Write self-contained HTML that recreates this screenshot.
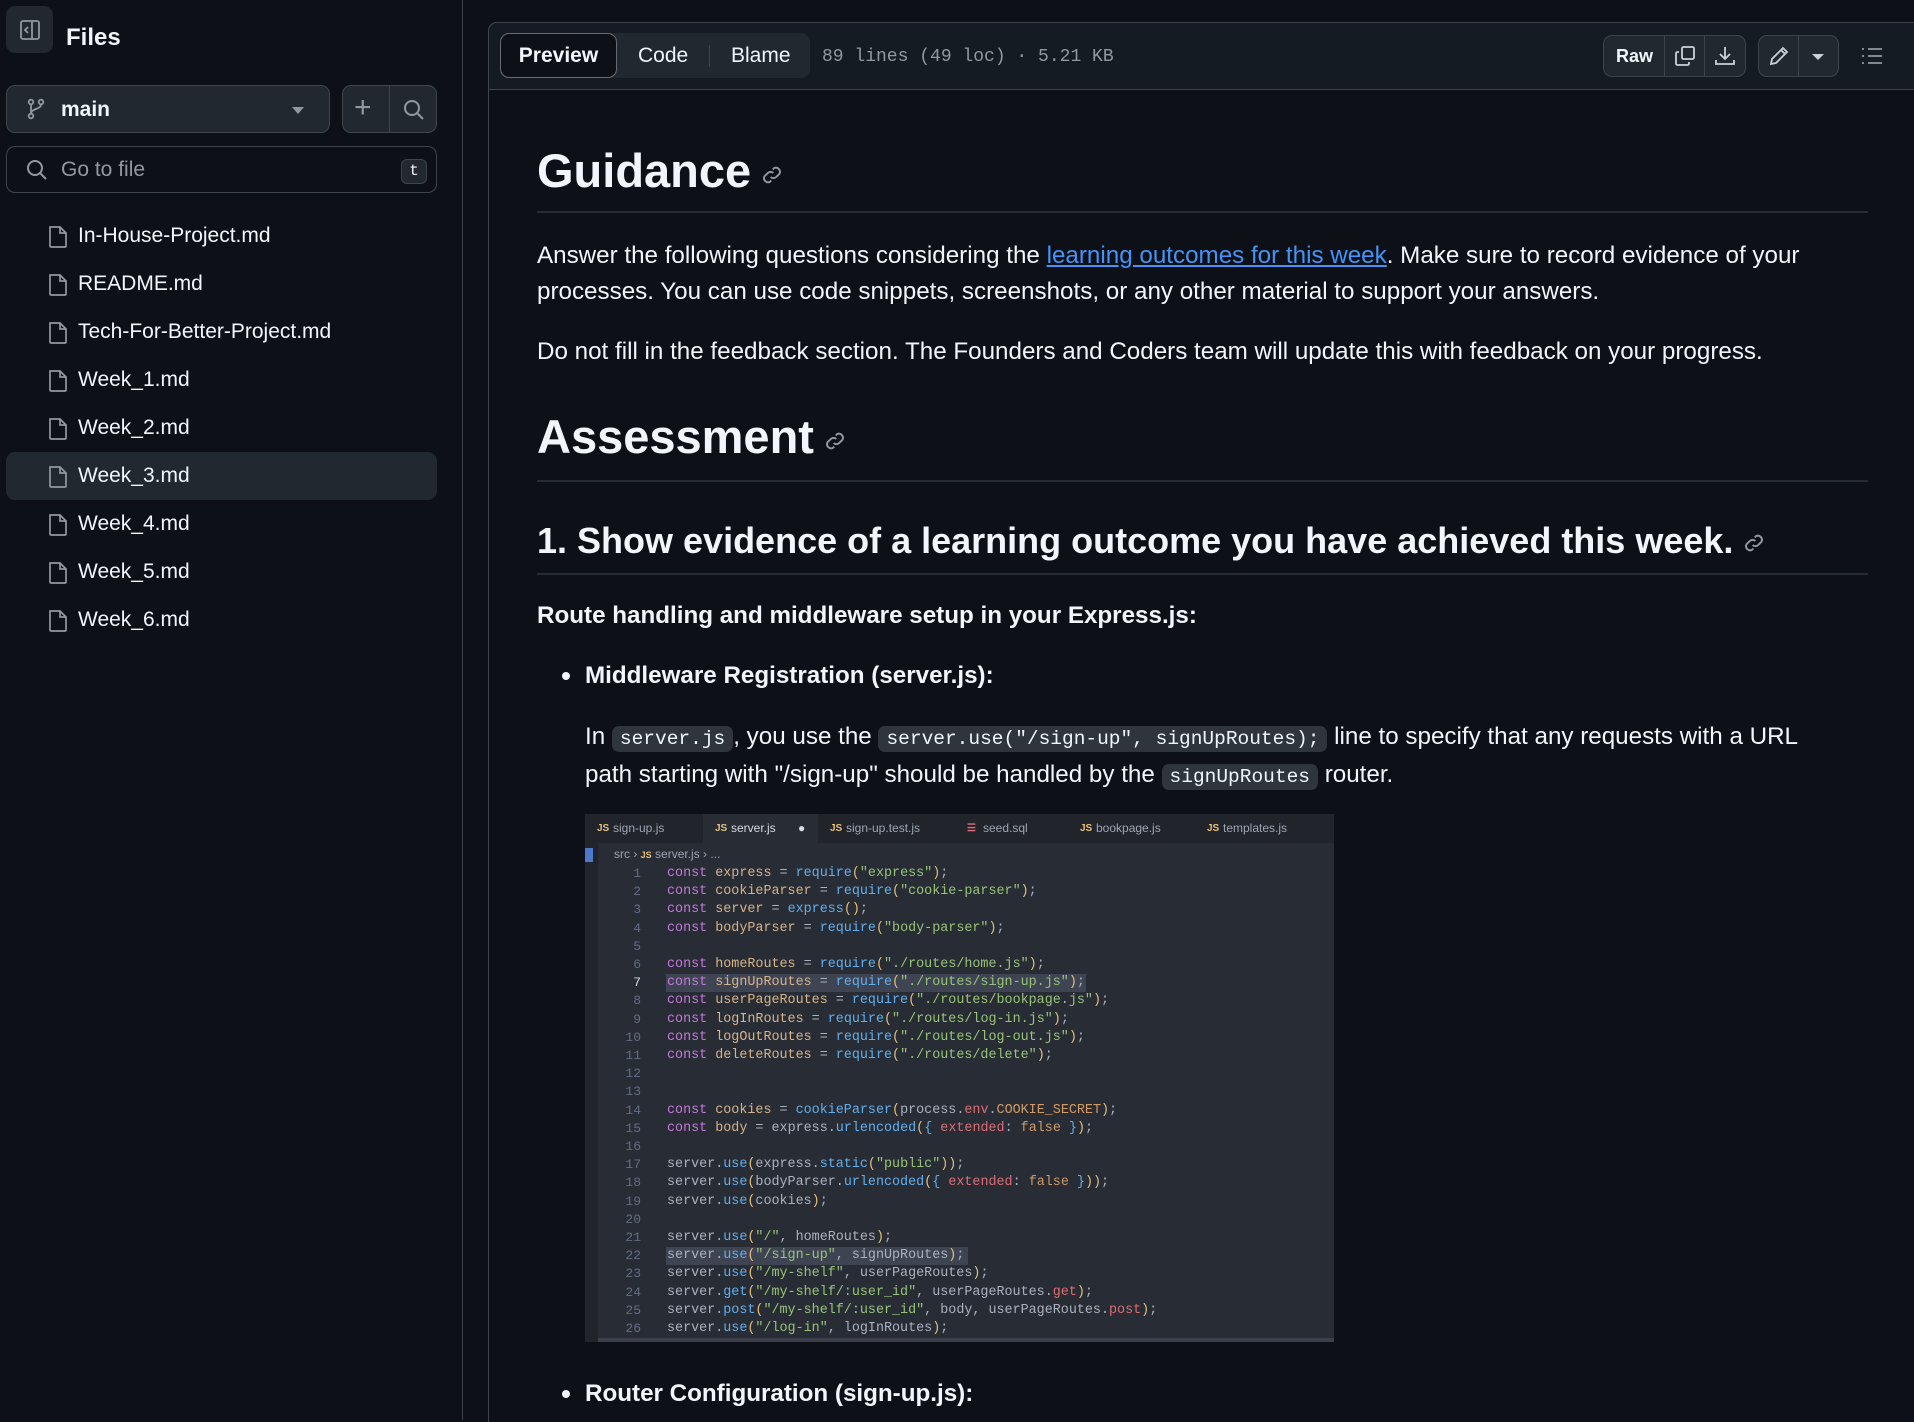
<!DOCTYPE html>
<html><head><meta charset="utf-8"><style>
*{box-sizing:border-box;margin:0;padding:0}
body{width:1914px;height:1420px;background:#0d1117;color:#f0f6fc;font-family:"Liberation Sans",sans-serif;position:relative;overflow:hidden}
.a{position:absolute}
.side{left:0;top:0;width:463px;height:1420px;border-right:1px solid #3d444d}
.btn{border:1px solid #3d444d;background:#212830;border-radius:9px}
.fi{position:absolute;left:6px;width:431px;height:48px;border-radius:9px;font-size:21px;line-height:48px;color:#f0f6fc;padding-left:72px}
.fi svg{position:absolute;left:42px;top:13px}
.sel{background:#212830}
.main{left:488px;top:22px;width:1426px;height:1400px;border:1px solid #3d444d;border-right:none;border-bottom:none;border-radius:9px 0 0 0}
.hdr{left:488px;top:22px;width:1426px;height:68px;background:#151b23;border:1px solid #3d444d;border-right:none;border-radius:9px 0 0 0}
.md{left:537px;width:1331px;white-space:nowrap}
p.t{font-size:24.2px;line-height:36px;color:#f0f6fc}
h1{font-size:47px;font-weight:bold;line-height:60px}
.rule{height:2px;background:#262c36;left:537px;width:1331px}
code{font-family:"Liberation Mono",monospace;font-size:19.5px;background:#2f353d;border-radius:7px;padding:2px 8px}
.lk{display:inline-block;vertical-align:middle;margin-left:10px}
.code{left:585px;top:814px;width:749px;height:528px;background:#282c34;overflow:hidden;font-family:"Liberation Mono",monospace}
.tabs{position:absolute;left:0;top:0;width:749px;height:29px;background:#21252b;font-family:"Liberation Sans",sans-serif;font-size:12px;color:#9da5b4}
.tab{position:absolute;top:0;height:29px;line-height:29px;padding-left:28px}
.tab b{position:absolute;left:12px;color:#e5c07b;font-size:10px;font-weight:bold}
.ln{position:absolute;left:0;width:56px;text-align:right;color:#636d83;font-size:13px}
.cl{position:absolute;left:82px;font-size:13.4px;color:#abb2bf;white-space:pre}
.k{color:#c678dd}.v{color:#d7b48a}.f{color:#61afef}.s{color:#98c379}.p{color:#e5c07b}.r{color:#e06c75}.o{color:#d19a66}
</style></head><body>
<div class="a side"></div>
<div class="a btn" style="left:6px;top:6px;width:47px;height:47px;border:none;background:#212830"></div>
<svg class="a" style="left:18px;top:18px" width="24" height="24" viewBox="0 0 24 24" fill="none" stroke="#9198a1" stroke-width="1.8"><rect x="3" y="3" width="18" height="18" rx="2"/><line x1="14" y1="3" x2="14" y2="21"/><path d="M10 9l-3 3 3 3" /></svg>
<div class="a" style="left:66px;top:24px;font-size:24px;font-weight:bold">Files</div>
<div class="a btn" style="left:6px;top:85px;width:324px;height:48px"></div>
<svg class="a" style="left:26px;top:98px" width="20" height="22" viewBox="0 0 20 22" fill="none" stroke="#9198a1" stroke-width="1.8"><circle cx="5" cy="4" r="2.3"/><circle cx="5" cy="18" r="2.3"/><circle cx="15" cy="4" r="2.3"/><path d="M5 6.5v9M15 6.5c0 5-10 4-10 9"/></svg>
<div class="a" style="left:61px;top:98px;font-size:21px;font-weight:bold">main</div>
<div class="a" style="left:292px;top:107px;border-left:6px solid transparent;border-right:6px solid transparent;border-top:7px solid #9198a1"></div>
<div class="a btn" style="left:342px;top:85px;width:95px;height:48px"></div>
<div class="a" style="left:389px;top:86px;width:1px;height:46px;background:#3d444d"></div>
<div class="a" style="left:354px;top:91px;font-size:30px;color:#9198a1;font-weight:300">+</div>
<svg class="a" style="left:402px;top:98px" width="24" height="24" viewBox="0 0 24 24" fill="none" stroke="#9198a1" stroke-width="2"><circle cx="10" cy="10" r="7"/><path d="M15 15l6 6"/></svg>
<div class="a" style="left:6px;top:146px;width:431px;height:47px;border:1px solid #3d444d;border-radius:9px"></div>
<svg class="a" style="left:25px;top:158px" width="24" height="24" viewBox="0 0 24 24" fill="none" stroke="#9198a1" stroke-width="2"><circle cx="10" cy="10" r="7"/><path d="M15 15l6 6"/></svg>
<div class="a" style="left:61px;top:158px;font-size:21px;color:#9198a1">Go to file</div>
<div class="a" style="left:401px;top:159px;width:26px;height:25px;border:1px solid #3d444d;border-radius:6px;background:#212830;font-family:'Liberation Mono',monospace;font-size:16px;text-align:center;line-height:23px;color:#f0f6fc">t</div>
<div class="fi" style="top:212px"><svg width="20" height="24" viewBox="0 0 20 24" fill="none" stroke="#9198a1" stroke-width="1.7"><path d="M2 2h10l6 6v13a1 1 0 0 1-1 1H3a1 1 0 0 1-1-1z M12 2v6h6"/></svg>In-House-Project.md</div>
<div class="fi" style="top:260px"><svg width="20" height="24" viewBox="0 0 20 24" fill="none" stroke="#9198a1" stroke-width="1.7"><path d="M2 2h10l6 6v13a1 1 0 0 1-1 1H3a1 1 0 0 1-1-1z M12 2v6h6"/></svg>README.md</div>
<div class="fi" style="top:308px"><svg width="20" height="24" viewBox="0 0 20 24" fill="none" stroke="#9198a1" stroke-width="1.7"><path d="M2 2h10l6 6v13a1 1 0 0 1-1 1H3a1 1 0 0 1-1-1z M12 2v6h6"/></svg>Tech-For-Better-Project.md</div>
<div class="fi" style="top:356px"><svg width="20" height="24" viewBox="0 0 20 24" fill="none" stroke="#9198a1" stroke-width="1.7"><path d="M2 2h10l6 6v13a1 1 0 0 1-1 1H3a1 1 0 0 1-1-1z M12 2v6h6"/></svg>Week_1.md</div>
<div class="fi" style="top:404px"><svg width="20" height="24" viewBox="0 0 20 24" fill="none" stroke="#9198a1" stroke-width="1.7"><path d="M2 2h10l6 6v13a1 1 0 0 1-1 1H3a1 1 0 0 1-1-1z M12 2v6h6"/></svg>Week_2.md</div>
<div class="fi sel" style="top:452px"><svg width="20" height="24" viewBox="0 0 20 24" fill="none" stroke="#9198a1" stroke-width="1.7"><path d="M2 2h10l6 6v13a1 1 0 0 1-1 1H3a1 1 0 0 1-1-1z M12 2v6h6"/></svg>Week_3.md</div>
<div class="fi" style="top:500px"><svg width="20" height="24" viewBox="0 0 20 24" fill="none" stroke="#9198a1" stroke-width="1.7"><path d="M2 2h10l6 6v13a1 1 0 0 1-1 1H3a1 1 0 0 1-1-1z M12 2v6h6"/></svg>Week_4.md</div>
<div class="fi" style="top:548px"><svg width="20" height="24" viewBox="0 0 20 24" fill="none" stroke="#9198a1" stroke-width="1.7"><path d="M2 2h10l6 6v13a1 1 0 0 1-1 1H3a1 1 0 0 1-1-1z M12 2v6h6"/></svg>Week_5.md</div>
<div class="fi" style="top:596px"><svg width="20" height="24" viewBox="0 0 20 24" fill="none" stroke="#9198a1" stroke-width="1.7"><path d="M2 2h10l6 6v13a1 1 0 0 1-1 1H3a1 1 0 0 1-1-1z M12 2v6h6"/></svg>Week_6.md</div>

<div class="a main"></div>
<div class="a hdr"></div>
<div class="a" style="left:500px;top:33px;width:310px;height:45px;background:#212830;border-radius:9px"></div>
<div class="a" style="left:500px;top:33px;width:117px;height:45px;background:#0d1117;border:1px solid #656c76;border-radius:9px;font-size:21px;font-weight:bold;text-align:center;line-height:43px">Preview</div>
<div class="a" style="left:638px;top:44px;font-size:21px">Code</div>
<div class="a" style="left:709px;top:45px;width:1px;height:22px;background:#3d444d"></div>
<div class="a" style="left:731px;top:44px;font-size:21px">Blame</div>
<div class="a" style="left:822px;top:47px;font-size:18px;font-family:'Liberation Mono',monospace;color:#9198a1">89 lines (49 loc) · 5.21 KB</div>
<div class="a btn" style="left:1603px;top:35px;width:143px;height:42px"></div>
<div class="a" style="left:1664px;top:36px;width:1px;height:40px;background:#3d444d"></div>
<div class="a" style="left:1704px;top:36px;width:1px;height:40px;background:#3d444d"></div>
<div class="a" style="left:1616px;top:46px;font-size:18px;font-weight:bold">Raw</div>
<svg class="a" style="left:1673px;top:44px" width="24" height="24" viewBox="0 0 24 24" fill="none" stroke="#c9d1d9" stroke-width="1.8"><rect x="9" y="3" width="12" height="12" rx="1.5"/><path d="M6 8H4.5A1.5 1.5 0 0 0 3 9.5v10A1.5 1.5 0 0 0 4.5 21h10a1.5 1.5 0 0 0 1.5-1.5V18"/></svg>
<svg class="a" style="left:1713px;top:44px" width="24" height="24" viewBox="0 0 24 24" fill="none" stroke="#c9d1d9" stroke-width="1.8"><path d="M12 3v12M7 10l5 5 5-5M3 16v4h18v-4"/></svg>
<div class="a btn" style="left:1758px;top:35px;width:81px;height:42px"></div>
<div class="a" style="left:1798px;top:36px;width:1px;height:40px;background:#3d444d"></div>
<svg class="a" style="left:1767px;top:44px" width="24" height="24" viewBox="0 0 24 24" fill="none" stroke="#c9d1d9" stroke-width="1.8"><path d="M4 20l1-5L16 4l4 4L9 19z M14 6l4 4"/></svg>
<div class="a" style="left:1812px;top:54px;border-left:6px solid transparent;border-right:6px solid transparent;border-top:6px solid #c9d1d9"></div>
<svg class="a" style="left:1860px;top:44px" width="24" height="24" viewBox="0 0 24 24" fill="none" stroke="#9198a1" stroke-width="1.8"><path d="M8 5h14M8 12h14M8 19h14M2 5h2M2 12h2M2 19h2"/></svg>

<h1 class="a md" style="top:141px">Guidance<svg class="lk" width="22" height="22" viewBox="0 0 16 16" fill="none" stroke="#9198a1" stroke-width="1.4"><path d="M7 9.5a3 3 0 0 0 4 0l2.5-2.5a3 3 0 0 0-4-4L8.5 4M9 6.5a3 3 0 0 0-4 0L2.5 9a3 3 0 0 0 4 4l1-1"/></svg></h1>
<div class="a rule" style="top:211px"></div>
<p class="a md t" style="top:238px">Answer the following questions considering the <span style="color:#4493f8;text-decoration:underline">learning outcomes for this week</span>. Make sure to record evidence of your<br>processes. You can use code snippets, screenshots, or any other material to support your answers.</p>
<p class="a md t" style="top:334px">Do not fill in the feedback section. The Founders and Coders team will update this with feedback on your progress.</p>
<h1 class="a md" style="top:407px">Assessment<svg class="lk" width="22" height="22" viewBox="0 0 16 16" fill="none" stroke="#9198a1" stroke-width="1.4"><path d="M7 9.5a3 3 0 0 0 4 0l2.5-2.5a3 3 0 0 0-4-4L8.5 4M9 6.5a3 3 0 0 0-4 0L2.5 9a3 3 0 0 0 4 4l1-1"/></svg></h1>
<div class="a rule" style="top:480px"></div>
<div class="a md" style="top:518px;font-size:36px;font-weight:bold;line-height:46px">1. Show evidence of a learning outcome you have achieved this week.<svg class="lk" width="22" height="22" viewBox="0 0 16 16" fill="none" stroke="#9198a1" stroke-width="1.4"><path d="M7 9.5a3 3 0 0 0 4 0l2.5-2.5a3 3 0 0 0-4-4L8.5 4M9 6.5a3 3 0 0 0-4 0L2.5 9a3 3 0 0 0 4 4l1-1"/></svg></div>
<div class="a rule" style="top:573px"></div>
<p class="a md t" style="top:598px;font-weight:bold">Route handling and middleware setup in your Express.js:</p>
<div class="a" style="left:562px;top:672px;width:8px;height:8px;border-radius:50%;background:#f0f6fc"></div>
<p class="a t" style="left:585px;top:658px;font-weight:bold;white-space:nowrap">Middleware Registration (server.js):</p>
<p class="a t" style="left:585px;top:719px;white-space:nowrap;line-height:35px">In <code>server.js</code>, you use the <code>server.use("/sign-up", signUpRoutes);</code> line to specify that any requests with a URL<br>path starting with "/sign-up" should be handled by the <code>signUpRoutes</code> router.</p>

<div class="a code">
<div class="tabs">
<div class="tab" style="left:0;width:118px"><b>JS</b>sign-up.js</div>
<div class="tab" style="left:118px;width:115px;background:#282c34;color:#d7dae0"><b>JS</b>server.js<span style="position:absolute;left:95px;top:0;color:#d7dae0">●</span></div>
<div class="tab" style="left:233px;width:137px"><b>JS</b>sign-up.test.js</div>
<div class="tab" style="left:370px;width:113px"><b style="color:#e06c75">☰</b>seed.sql</div>
<div class="tab" style="left:483px;width:127px"><b>JS</b>bookpage.js</div>
<div class="tab" style="left:610px;width:139px"><b>JS</b>templates.js</div>
</div>
<div style="position:absolute;left:0;top:29px;width:13px;height:499px;background:#21252b"></div>
<div style="position:absolute;left:0;top:34px;width:8px;height:14px;background:#4d78cc"></div>
<div style="position:absolute;left:29px;top:33px;font-family:'Liberation Sans',sans-serif;font-size:12px;color:#9da5b4">src › <span style="color:#e5c07b;font-size:9px;font-weight:bold">JS</span> server.js › ...</div>
<div style="position:absolute;left:81px;top:160px;width:420px;height:18px;background:#3e4451"></div>
<div style="position:absolute;left:81px;top:433px;width:302px;height:18px;background:#3e4451"></div>
<div class="ln" style="top:51px;line-height:18.2px">1<br>2<br>3<br>4<br>5<br>6<br><span style="color:#d7dae0">7</span><br>8<br>9<br>10<br>11<br>12<br>13<br>14<br>15<br>16<br>17<br>18<br>19<br>20<br>21<br>22<br>23<br>24<br>25<br>26</div>
<div class="cl" style="top:51px;line-height:18.2px"><span class="k">const</span> <span class="v">express</span> = <span class="f">require</span><span class="p">(</span><span class="s">"express"</span><span class="p">)</span>;
<span class="k">const</span> <span class="v">cookieParser</span> = <span class="f">require</span><span class="p">(</span><span class="s">"cookie-parser"</span><span class="p">)</span>;
<span class="k">const</span> <span class="v">server</span> = <span class="f">express</span><span class="p">()</span>;
<span class="k">const</span> <span class="v">bodyParser</span> = <span class="f">require</span><span class="p">(</span><span class="s">"body-parser"</span><span class="p">)</span>;

<span class="k">const</span> <span class="v">homeRoutes</span> = <span class="f">require</span><span class="p">(</span><span class="s">"./routes/home.js"</span><span class="p">)</span>;
<span class="k">const</span> <span class="v">signUpRoutes</span> = <span class="f">require</span><span class="p">(</span><span class="s">"./routes/sign-up.js"</span><span class="p">)</span>;
<span class="k">const</span> <span class="v">userPageRoutes</span> = <span class="f">require</span><span class="p">(</span><span class="s">"./routes/bookpage.js"</span><span class="p">)</span>;
<span class="k">const</span> <span class="v">logInRoutes</span> = <span class="f">require</span><span class="p">(</span><span class="s">"./routes/log-in.js"</span><span class="p">)</span>;
<span class="k">const</span> <span class="v">logOutRoutes</span> = <span class="f">require</span><span class="p">(</span><span class="s">"./routes/log-out.js"</span><span class="p">)</span>;
<span class="k">const</span> <span class="v">deleteRoutes</span> = <span class="f">require</span><span class="p">(</span><span class="s">"./routes/delete"</span><span class="p">)</span>;


<span class="k">const</span> <span class="v">cookies</span> = <span class="f">cookieParser</span><span class="p">(</span>process.<span class="r">env</span>.<span class="o">COOKIE_SECRET</span><span class="p">)</span>;
<span class="k">const</span> <span class="v">body</span> = express.<span class="f">urlencoded</span><span class="p">(</span><span class="f">{</span> <span class="r">extended</span>: <span class="o">false</span> <span class="f">}</span><span class="p">)</span>;

server.<span class="f">use</span><span class="p">(</span>express.<span class="f">static</span><span class="p">(</span><span class="s">"public"</span><span class="p">))</span>;
server.<span class="f">use</span><span class="p">(</span>bodyParser.<span class="f">urlencoded</span><span class="p">(</span><span class="f">{</span> <span class="r">extended</span>: <span class="o">false</span> <span class="f">}</span><span class="p">))</span>;
server.<span class="f">use</span><span class="p">(</span>cookies<span class="p">)</span>;

server.<span class="f">use</span><span class="p">(</span><span class="s">"/"</span>, homeRoutes<span class="p">)</span>;
server.<span class="f">use</span><span class="p">(</span><span class="s">"/sign-up"</span>, signUpRoutes<span class="p">)</span>;
server.<span class="f">use</span><span class="p">(</span><span class="s">"/my-shelf"</span>, userPageRoutes<span class="p">)</span>;
server.<span class="f">get</span><span class="p">(</span><span class="s">"/my-shelf/:user_id"</span>, userPageRoutes.<span class="r">get</span><span class="p">)</span>;
server.<span class="f">post</span><span class="p">(</span><span class="s">"/my-shelf/:user_id"</span>, body, userPageRoutes.<span class="r">post</span><span class="p">)</span>;
server.<span class="f">use</span><span class="p">(</span><span class="s">"/log-in"</span>, logInRoutes<span class="p">)</span>;</div>
<div style="position:absolute;left:13px;top:524px;width:736px;height:4px;background:#3a3f4b"></div>
</div>

<div class="a" style="left:562px;top:1390px;width:8px;height:8px;border-radius:50%;background:#f0f6fc"></div>
<p class="a t" style="left:585px;top:1376px;font-weight:bold;white-space:nowrap">Router Configuration (sign-up.js):</p>
</body></html>
